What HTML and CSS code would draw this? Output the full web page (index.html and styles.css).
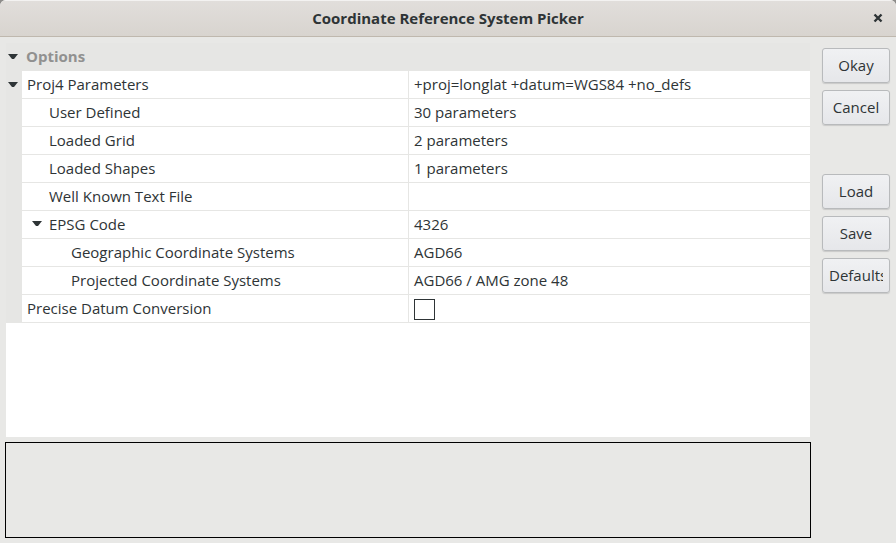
FILE: index.html
```html
<!DOCTYPE html>
<html lang="en">
<head>
<meta charset="utf-8">
<title>Coordinate Reference System Picker</title>
<link rel="stylesheet" href="styles.css">
</head>
<body>
<header class="titlebar">
  <h1 class="title">Coordinate Reference System Picker</h1>
  <button class="close" type="button" aria-label="Close">
    <svg width="10" height="10" viewBox="0 0 10 10"><path d="M1.5 1.5 8.5 8.5M8.5 1.5 1.5 8.5" fill="none" stroke="currentColor" stroke-width="2.4"/></svg>
  </button>
</header>
<main class="content">
  <div class="left">
    <div class="panel">
      <table class="props">
        <colgroup><col class="col-gutter"><col><col class="col-value"></colgroup>
        <tbody>
          <tr class="category">
            <td class="gutter"><button class="arrow" type="button" aria-label="Collapse Options"></button></td>
            <th colspan="2" scope="colgroup">Options</th>
          </tr>
          <tr>
            <td class="gutter"><button class="arrow" type="button" aria-label="Collapse Proj4 Parameters"></button></td>
            <th scope="row">Proj4 Parameters</th><td class="value">+proj=longlat +datum=WGS84 +no_defs</td>
          </tr>
          <tr><td class="gutter"></td><th class="level-1" scope="row">User Defined</th><td class="value">30 parameters</td></tr>
          <tr><td class="gutter"></td><th class="level-1" scope="row">Loaded Grid</th><td class="value">2 parameters</td></tr>
          <tr><td class="gutter"></td><th class="level-1" scope="row">Loaded Shapes</th><td class="value">1 parameters</td></tr>
          <tr><td class="gutter"></td><th class="level-1" scope="row">Well Known Text File</th><td class="value"></td></tr>
          <tr>
            <td class="gutter"></td>
            <th class="branch" scope="row"><div class="branch-label"><button class="arrow" type="button" aria-label="Collapse EPSG Code"></button>EPSG Code</div></th>
            <td class="value">4326</td>
          </tr>
          <tr><td class="gutter"></td><th class="level-2" scope="row">Geographic Coordinate Systems</th><td class="value">AGD66</td></tr>
          <tr><td class="gutter"></td><th class="level-2" scope="row">Projected Coordinate Systems</th><td class="value">AGD66 / AMG zone 48</td></tr>
          <tr>
            <td class="gutter"></td>
            <th scope="row"><label for="precise">Precise Datum Conversion</label></th>
            <td class="value toggle"><input class="check" id="precise" type="checkbox"></td>
          </tr>
        </tbody>
      </table>
    </div>
    <section class="description" aria-label="Description"></section>
  </div>
  <div class="actions">
    <button class="btn" type="button">Okay</button>
    <button class="btn" type="button">Cancel</button>
    <button class="btn group-start" type="button">Load</button>
    <button class="btn" type="button">Save</button>
    <button class="btn" type="button"><span class="clip">Defaults</span></button>
  </div>
</main>
</body>
</html>
```

FILE: styles.css
```css
* {
  box-sizing: border-box;
}

html {
  background: #8d8c8a;
}

body {
  display: flex;
  flex-direction: column;
  min-height: 100vh;
  margin: 0;
  overflow: hidden;
  border-radius: 6px 6px 0 0;
  background: #e8e8e6;
  color: #2e3436;
  font: 15px/20px "Open Sans", "Noto Sans", sans-serif;
}

button {
  padding: 0;
  border: 0;
  background: none;
  color: inherit;
  font: inherit;
}

.titlebar {
  display: grid;
  grid-template-columns: 1fr auto 1fr;
  align-items: center;
  height: 37px;
  padding: 0 13px 2px;
  border-top: 1px solid #f3f2f1;
  border-bottom: 1px solid #bfb8ae;
  background: linear-gradient(#e1dedb, #d8d4cf);
}

.title {
  grid-column: 2;
  margin: 0;
  font-size: 15px;
  font-weight: 700;
}

.close {
  display: flex;
  justify-self: end;
}

.content {
  display: flex;
  flex: 1;
  gap: 11px;
  padding: 6px 6px 5px 5px;
}

.left {
  display: flex;
  flex: 1;
  flex-direction: column;
  gap: 5px;
}

.panel {
  flex: 1;
  margin: 0 1px;
  background: #fff;
}

.props {
  width: 100%;
  table-layout: fixed;
  border-collapse: separate;
  border-spacing: 0;
}

.col-gutter {
  width: 16px;
}

.col-value {
  width: 50%;
}

.props th,
.props td {
  height: 28px;
  padding: 0 5px 2px;
  border-bottom: 1px solid #e6e6e4;
  font-weight: 400;
  text-align: left;
  vertical-align: middle;
}

.props .gutter {
  padding: 0 2px;
  background: #e6e6e4;
}

.props .category th {
  padding-left: 4px;
  background: #e6e6e4;
  color: #919190;
  font-weight: 700;
}

.props .value {
  border-left: 1px solid #e6e6e4;
}

.props .toggle {
  padding-top: 2px;
  padding-bottom: 0;
}

.props .level-1 {
  padding-left: 27px;
}

.props .level-2 {
  padding-left: 49px;
}

.props .branch {
  padding-left: 10px;
}

.branch-label {
  display: flex;
  align-items: center;
  gap: 7px;
}

.arrow {
  display: block;
  width: 10px;
  height: 5px;
  background: #2e3436;
  clip-path: polygon(0 0, 100% 0, 60% 100%, 40% 100%);
}

.check {
  display: block;
  width: 21px;
  height: 21px;
  margin: 0;
  appearance: none;
  border: 1px solid #2e3436;
  background: #fff;
}

.description {
  height: 96px;
  border: 1px solid #000;
}

.actions {
  display: flex;
  flex-direction: column;
  gap: 7px;
  width: 68px;
  padding-top: 5px;
}

.btn {
  height: 35px;
  padding: 0 6px 2px;
  border: 1px solid #b8babc;
  border-radius: 3px;
  background: linear-gradient(#f0f1f3, #e6e7ea);
  box-shadow: 0 1px 1px #c9c9c8;
}

.group-start {
  margin-top: 42px;
}

.clip {
  display: block;
  overflow: hidden;
  white-space: nowrap;
}
```
